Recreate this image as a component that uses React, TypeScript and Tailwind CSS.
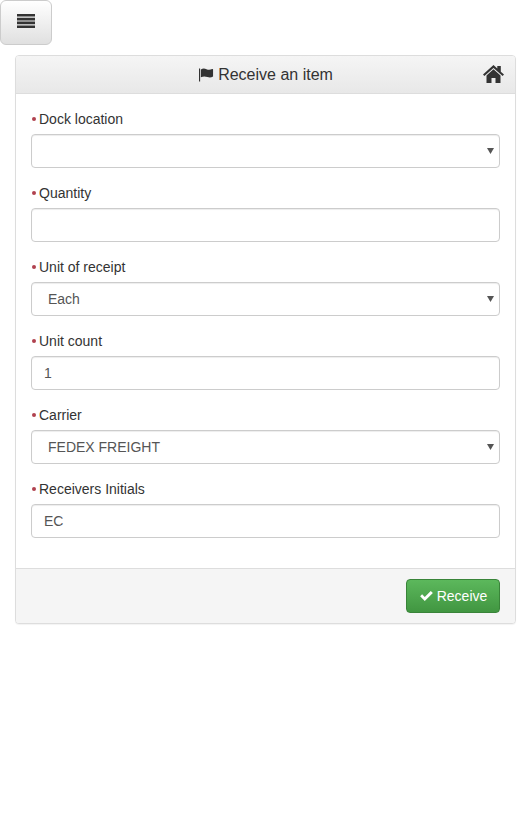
const controlClass =
  "block h-[34px] w-full rounded border border-[#ccc] bg-white px-3 py-1.5 text-sm leading-5 text-[#555] shadow-[inset_0_1px_1px_rgba(0,0,0,0.075)] outline-none";

function Field({ label, children }: { label: string; children: React.ReactNode }) {
  return (
    <div className="mb-[15px]">
      <label className="mb-[5px] flex h-5 items-center text-sm leading-5 text-[#333]">
        <span className="ml-px mr-[3px] h-1 w-1 rounded-full bg-[#b0414f]" />
        {label}
      </label>
      {children}
    </div>
  );
}

function SelectField({ label, value, options }: { label: string; value: string; options: string[] }) {
  return (
    <Field label={label}>
      <div className="relative">
        <select defaultValue={value} className={`${controlClass} appearance-none pl-4`}>
          {options.map((o) => (
            <option key={o} value={o}>
              {o}
            </option>
          ))}
        </select>
        <svg viewBox="0 0 7 6" className="absolute right-[6px] top-[14px] h-[6px] w-[7px]">
          <path d="M0 0h7L3.5 6z" fill="#555" />
        </svg>
      </div>
    </Field>
  );
}

function TextField({ label, value }: { label: string; value: string }) {
  return (
    <Field label={label}>
      <input type="text" defaultValue={value} className={controlClass} />
    </Field>
  );
}

export default function App() {
  return (
    <div className="min-h-[822px] bg-white font-['Liberation_Sans',Arial,sans-serif]">
      <button className="flex h-[45px] w-[52px] items-center justify-center rounded-md border border-[#ccc] bg-gradient-to-b from-white to-[#e0e0e0] pb-[3px]">
        <svg viewBox="0 0 18 14" className="h-[14px] w-[18px]">
          <path d="M0 0h18v2.600H0zM0 3.800h18v2.600H0zM0 7.600h18v2.600H0zM0 11.400h18V14H0z" fill="#333" />
        </svg>
      </button>

      <div className="ml-[15px] mr-[15px] mt-[10px] rounded border border-[#ddd] bg-white shadow-[0_1px_1px_rgba(0,0,0,0.05)]">
        <div className="relative flex h-[38px] items-center justify-center rounded-t-[3px] border-b border-[#ddd] bg-gradient-to-b from-[#f5f5f5] to-[#e8e8e8] text-base text-[#333]">
          <svg viewBox="0 0 16 14" className="ml-px mr-[4px] h-[14px] w-[15px]">
            <path d="M0 0h1.200v14H0zM2 1.200c2-1.400 4-1.200 6-.4s4 .8 6-.2c.6-.3 1 0 1 .4v7.600c-2 1.400-4 1.400-6 .6s-4.500-1-7 .2z" fill="#333" />
          </svg>
          Receive an item
          <svg viewBox="0 0 21 18" className="absolute right-[11px] top-[9px] h-[18px] w-[21px]">
            <path
              d="M10.500 0l3.800 3.400V1h3.500v5.700l3.200 2.800-1.400 1.500-9.100-8-9.100 8L0 9.500zM10.500 4.300l7 6.200V18h-5v-5h-4v5h-5v-7.500z"
              fill="#333"
            />
          </svg>
        </div>

        <div className="p-[15px]">
          <SelectField label="Dock location" value="" options={["", "Dock 1"]} />
          <TextField label="Quantity" value="" />
          <SelectField label="Unit of receipt" value="Each" options={["Each", "Case"]} />
          <TextField label="Unit count" value="1" />
          <SelectField label="Carrier" value="FEDEX FREIGHT" options={["FEDEX FREIGHT", "UPS"]} />
          <TextField label="Receivers Initials" value="EC" />
        </div>

        <div className="flex justify-end rounded-b-[3px] border-t border-[#ddd] bg-[#f5f5f5] px-[15px] py-[10px]">
          <button className="flex h-[34px] w-[94px] items-center justify-center rounded border border-[#398439] bg-gradient-to-b from-[#5cb85c] to-[#419641] text-sm text-white">
            <svg viewBox="0 0 14 11" className="ml-px mr-[4px] h-[10px] w-[13px]">
              <path d="M0 5.800l2.200-2.200 2.900 2.900L11.700 0 14 2.200 5.100 11z" fill="#fff" />
            </svg>
            Receive
          </button>
        </div>
      </div>
    </div>
  );
}
